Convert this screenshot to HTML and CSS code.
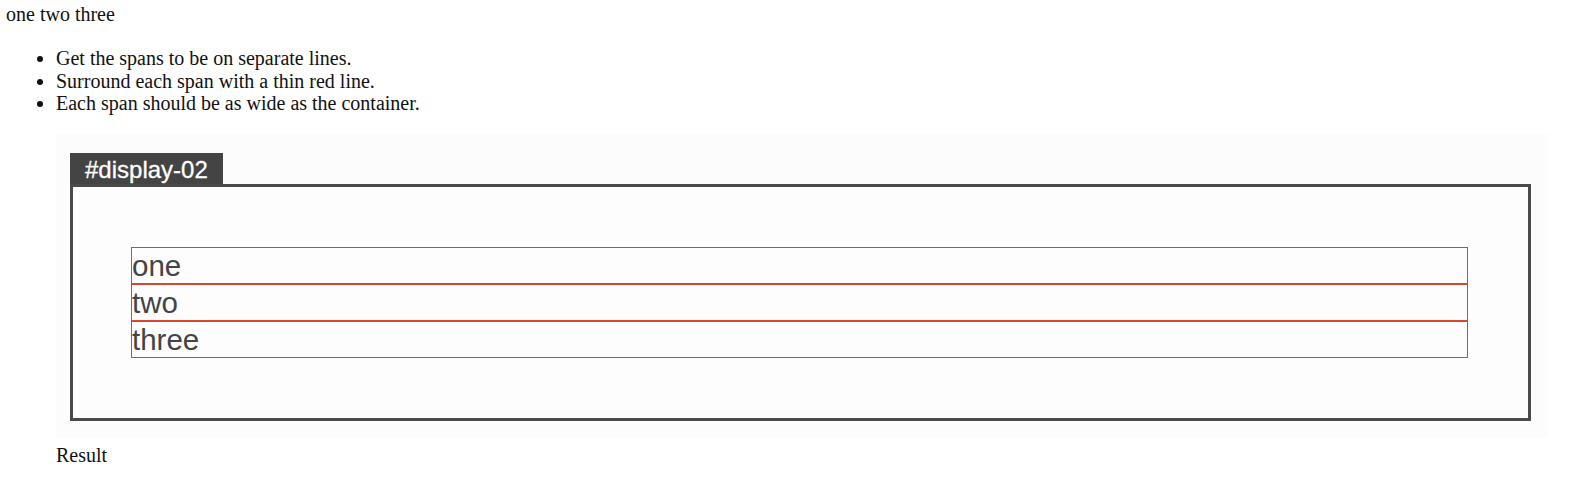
FILE: index.html
```html
<!DOCTYPE html>
<html>
<head>
<meta charset="utf-8">
<link rel="stylesheet" href="styles.css">
</head>
<body>
<div class="page">
  <p class="intro">one two three</p>
  <ul class="tasks">
    <li>Get the spans to be on separate lines.</li>
    <li>Surround each span with a thin red line.</li>
    <li>Each span should be as wide as the container.</li>
  </ul>
  <figure class="result">
    <div class="shot">
      <div class="tab">#display-02</div>
      <div class="box">
        <span class="item">one</span>
        <span class="item">two</span>
        <span class="item">three</span>
      </div>
    </div>
    <figcaption class="caption">Result</figcaption>
  </figure>
</div>
</body>
</html>
```
FILE: styles.css
```css
html, body {
  margin: 0;
  padding: 0;
  background: #ffffff;
}
.page {
  padding: 3px 6px 0 6px;
  font-family: "Liberation Serif", "Times New Roman", serif;
  font-size: 20px;
  line-height: 22.5px;
  color: #111;
}
.intro {
  margin: 0;
  line-height: 23px;
}
.tasks {
  margin: 21px 0 19px 0;
  padding-left: 50px;
}
.result {
  margin: 0 0 0 50px;
}
.shot {
  width: 1492px;
  height: 304px;
  box-sizing: border-box;
  background: #fcfcfc;
  padding: 19px 12px 0 14px;
}
.tab {
  display: inline-block;
  vertical-align: top;
  height: 31px;
  line-height: 33px;
  padding: 0 15px;
  background: #444444;
  color: #ffffff;
  font-family: "Liberation Sans", Arial, sans-serif;
  font-size: 24px;
  -webkit-text-stroke: 0.3px #ffffff;
}
.box {
  box-sizing: border-box;
  width: 1461px;
  height: 237px;
  border: 3px solid #4a4a4a;
  background: #fdfdfd;
  padding: 60px 60px 0 58px;
}
.item {
  display: block;
  border: 1px solid #d9452d;
  height: 35px;
  line-height: 36px;
  font-family: "Liberation Sans", Arial, sans-serif;
  font-size: 29.5px;
  color: #444444;
}
.caption {
  margin-top: 6px;
  line-height: 23px;
}
```
